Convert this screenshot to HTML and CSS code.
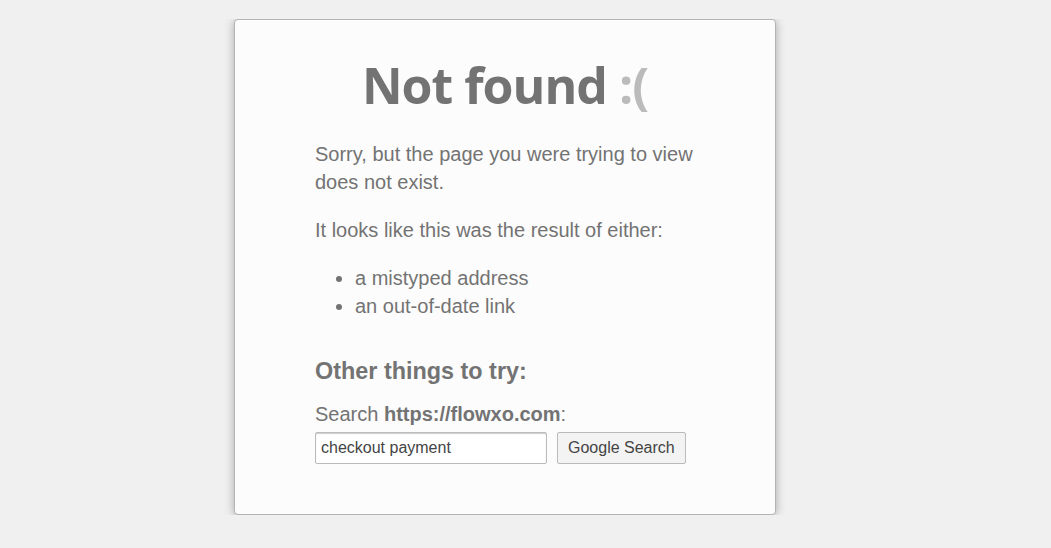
FILE: index.html
```html
<!DOCTYPE html>
<html lang="en">
<head>
<meta charset="utf-8">
<title>Page Not Found</title>
<link rel="stylesheet" href="styles.css">
</head>
<body>
<div class="card">
  <div class="container">
    <h1 class="title">Not found <span class="sad">:(</span></h1>
    <p class="text">Sorry, but the page you were trying to view does not exist.</p>
    <p class="text">It looks like this was the result of either:</p>
    <ul class="reasons">
      <li>a mistyped address</li>
      <li>an out-of-date link</li>
    </ul>
    <h3 class="subtitle">Other things to try:</h3>
    <div class="fixurl">
      <div class="search-label">Search <b>https://flowxo.com</b>:</div>
      <form class="search-form">
        <input class="search-input" type="text" value="checkout payment">
        <button class="search-btn" type="button">Google Search</button>
      </form>
    </div>
  </div>
</div>
</body>
</html>
```

FILE: styles.css
```css
html {
  padding: 19px 51px 19px 10px;
  margin: 0;
  font-size: 20px;
  line-height: 1.4;
  color: #737373;
  background: #f0f0f0;
  font-family: "Liberation Sans", Arial, sans-serif;
}
body {
  margin: 0;
}
.card {
  max-width: 500px;
  padding: 30px 20px 50px;
  border: 1px solid #b3b3b3;
  border-radius: 4px;
  margin: 0 auto;
  box-shadow: 0 1px 10px #a7a7a7, inset 0 1px 0 #fff;
  background: #fcfcfc;
}
.container {
  max-width: 380px;
  margin: 0 auto;
}
.title {
  margin: 0 -60px;
  font-family: "Open Sans", "Liberation Sans", sans-serif;
  font-weight: 700;
  font-size: 50px;
  line-height: 70px;
  text-align: center;
  letter-spacing: -1px;
}
.sad {
  color: #bbb;
}
.text {
  margin: 20px 0;
}
.reasons {
  padding: 0 0 0 40px;
  margin: 20px 0;
}
.subtitle {
  margin: 1.5em 0 0.5em;
  font-size: 1.17em;
  line-height: 1.4;
}
.search-form {
  margin: 0;
  display: flex;
  align-items: flex-start;
}
.search-input,
.search-btn {
  border: 1px solid #bbb;
  font-family: "Liberation Sans", Arial, sans-serif;
  font-size: 16px;
  line-height: normal;
  color: #444;
  border-radius: 2px;
  box-sizing: content-box;
}
.search-input {
  width: 220px;
  height: 20px;
  padding: 5px;
  margin: 4px 10px 0 0;
  box-shadow: inset 0 1px 1px #ccc;
  background: #fff;
}
.search-btn {
  height: 30px;
  padding: 0 10px;
  margin: 4px 0 0;
  white-space: nowrap;
  background-color: #f3f3f3;
}
```
